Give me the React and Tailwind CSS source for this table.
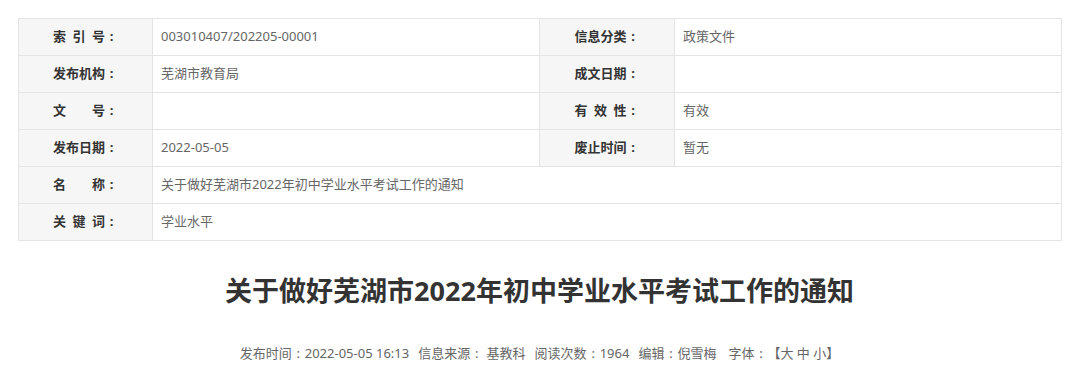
import React from "react";

// full-width colon drawn centred in its em box, as the reference font does
const C = () => <span className="inline-block w-[1em] text-center">:</span>;

const rows = [
  [
    { label: "索\u2002引\u2002号", value: "003010407/202205-00001" },
    { label: "信息分类", value: "政策文件" },
  ],
  [
    { label: "发布机构", value: "芜湖市教育局" },
    { label: "成文日期", value: "" },
  ],
  [
    { label: "文\u3000\u3000号", value: "" },
    { label: "有\u2002效\u2002性", value: "有效" },
  ],
  [
    { label: "发布日期", value: "2022-05-05" },
    { label: "废止时间", value: "暂无" },
  ],
  [{ label: "名\u3000\u3000称", value: "关于做好芜湖市2022年初中学业水平考试工作的通知" }],
  [{ label: "关\u2002键\u2002词", value: "学业水平" }],
];

const Label = ({ children }) => (
  <div className="h-[37px] border-r border-b border-[#e4e4e4] bg-[#f6f6f6] flex items-center justify-center text-[13px] font-bold text-[#333]">
    <span>
      {children}
      <C />
    </span>
  </div>
);

const Value = ({ children, wide }) => (
  <div
    className={`h-[37px] border-r border-b border-[#e4e4e4] flex items-center pl-2 text-[13px] text-[#666] ${
      wide ? "col-span-3" : ""
    }`}
  >
    {children}
  </div>
);

const App = () => {
  return (
    <div className="w-[1079px] h-[370px] bg-white font-['Noto_Sans','Noto_Sans_CJK_SC',sans-serif] pt-[18px] overflow-hidden">
      <div className="ml-[18px] w-[1044px] grid grid-cols-[134px_387px_135px_387px] border-l border-t border-[#e4e4e4]">
        {rows.map((row, i) =>
          row.map((cell, j) => (
            <React.Fragment key={`${i}-${j}`}>
              <Label>{cell.label}</Label>
              <Value wide={row.length === 1}>{cell.value}</Value>
            </React.Fragment>
          ))
        )}
      </div>

      <h1 className="mt-[30px] text-center text-[27px] leading-[40px] font-bold text-[#333]">
        关于做好芜湖市2022年初中学业水平考试工作的通知
      </h1>

      <div className="mt-[30px] flex justify-center text-[13px] leading-[24px] text-[#666]">
        <span>
          发布时间<C />2022-05-05 16:13
        </span>
        <span className="ml-[9px]">
          信息来源<C /> 基教科
        </span>
        <span className="ml-[9px]">
          阅读次数<C />1964
        </span>
        <span className="ml-[9px]">
          编辑<C />倪雪梅
        </span>
        <span className="ml-[12px]">
          字体<C />【<span>大</span> <span>中</span> <span>小</span>】
        </span>
      </div>
    </div>
  );
};

export default App;
